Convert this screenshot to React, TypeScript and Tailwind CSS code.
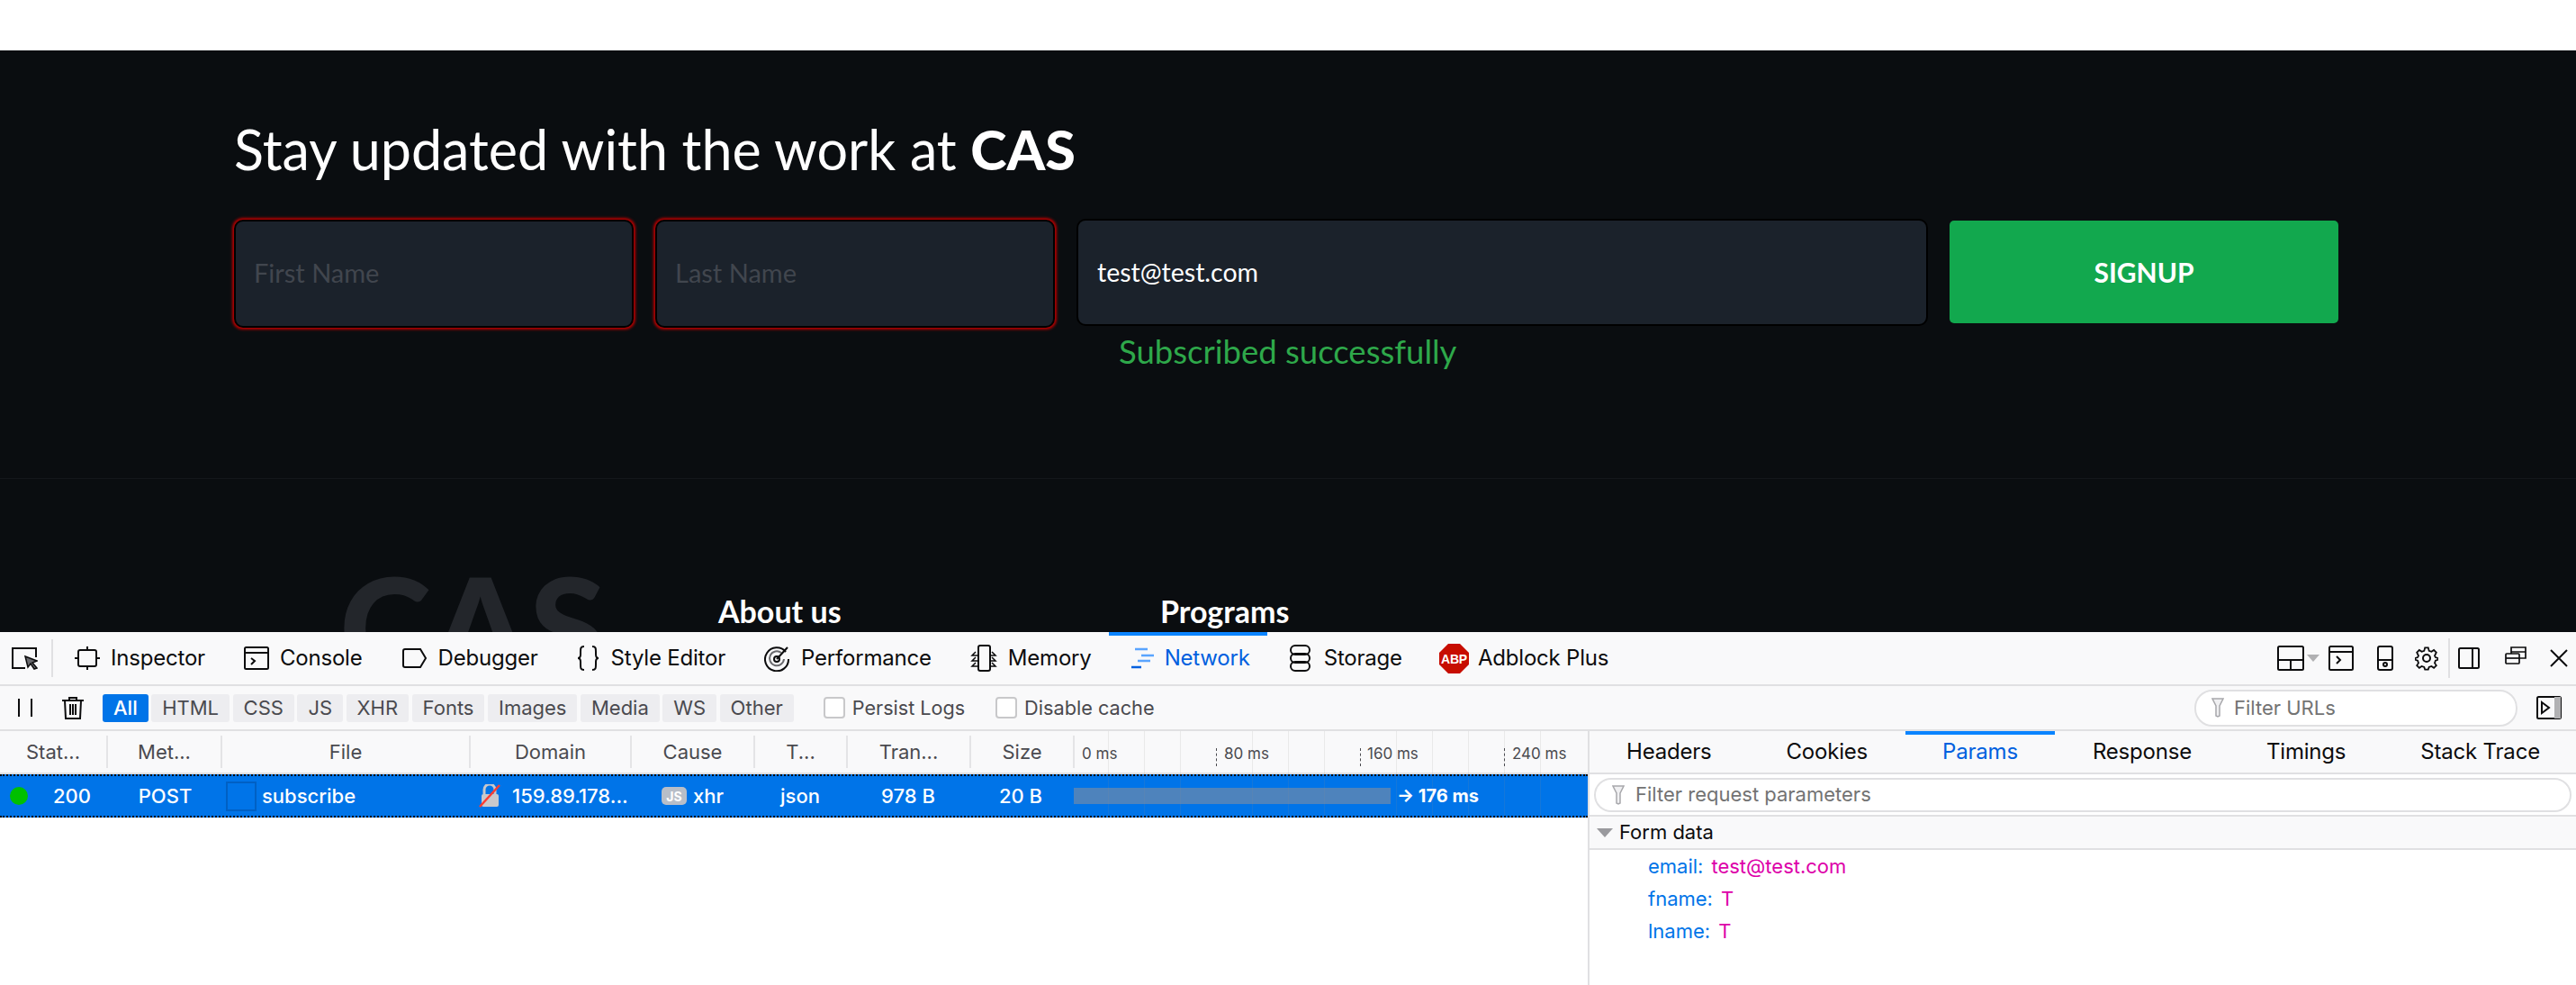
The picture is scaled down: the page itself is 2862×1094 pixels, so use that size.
const headers = [
  { label: "Stat...", width: "w-[120px]" },
  { label: "Met...", width: "w-[127px]" },
  { label: "File", width: "w-[276px]" },
  { label: "Domain", width: "w-[179px]" },
  { label: "Cause", width: "w-[137px]" },
  { label: "T...", width: "w-[103px]" },
  { label: "Tran...", width: "w-[137px]" },
  { label: "Size", width: "w-[115px]" },
]

const filters = ["HTML", "CSS", "JS", "XHR", "Fonts", "Images", "Media", "WS", "Other"]
const gridLines = [1231, 1271, 1311, 1391, 1431, 1471, 1551, 1591, 1631, 1671, 1711]
const params = [
  { key: "email:", value: "test@test.com" },
  { key: "fname:", value: "T" },
  { key: "lname:", value: "T" },
]

function Tab({ icon, label, active }: { icon: React.ReactNode; label: string; active?: boolean }) {
  return (
    <div className="relative flex h-full items-center gap-[12px] pl-6 pr-[19px]">
      {active && <div className="absolute left-0 right-0 top-0 h-[4px] bg-[#0a84ff]" />}
      {icon}
      <span className={active ? "text-[#0060df]" : "text-[#0c0c0d]"}>{label}</span>
    </div>
  )
}

function Svg({ w, h, children }: { w: number; h: number; children: React.ReactNode }) {
  return (
    <svg width={w} height={h} viewBox={`0 0 ${w} ${h}`} fill="none" stroke="#0c0c0d" strokeWidth="2" className="shrink-0">
      {children}
    </svg>
  )
}

function FilterIcon() {
  return (
    <svg width="14" height="22" viewBox="0 0 14 22" className="shrink-0">
      <path d="M1 1h12l-4 8v11l-2 1-2-1V9z" fill="#f0f0f2" stroke="#a8a8ac" strokeWidth="1.5" />
    </svg>
  )
}

export default function App() {
  return (
    <div className="flex h-[1094px] w-[2862px] flex-col overflow-hidden bg-white font-['Inter',sans-serif]">
      <div className="h-14 shrink-0 bg-white" />

      {/* page behind the devtools */}
      <div className="h-[646px] shrink-0 overflow-hidden bg-[#0a0d10] font-['Lato',sans-serif]">
        <div className="h-[476px] border-b border-[#14171b] pl-[260px] pt-[85px]">
          <h2 className="text-[61px] font-normal leading-[50px] text-white">
            Stay updated with the work at <b className="font-black">CAS</b>
          </h2>
          <div className="mt-[52px] flex items-start">
            <input
              placeholder="First Name"
              readOnly
              className="mt-[1px] h-[120px] w-[444px] rounded-[10px] border-2 border-black bg-[#1b222b] pb-[3px] pl-[20px] pr-[22px] text-[29px] shadow-[0_0_3px_2px_#b80000] outline-none placeholder:text-[#41464e]"
            />
            <input
              placeholder="Last Name"
              readOnly
              className="ml-[24px] mt-[1px] h-[120px] w-[444px] rounded-[10px] border-2 border-black bg-[#1b222b] pb-[3px] pl-[20px] pr-[22px] text-[29px] shadow-[0_0_3px_2px_#b80000] outline-none placeholder:text-[#41464e]"
            />
            <div className="ml-[24px] w-[946px]">
              <input
                value="test@test.com"
                readOnly
                className="h-[119px] w-full rounded-[10px] border-2 border-black bg-[#1b222b] pb-[2px] pl-[21px] pr-[22px] text-[28.5px] text-white outline-none"
              />
              <p className="ml-[47px] mt-[4px] text-[36.5px] leading-[48px] text-[#2ea84a]">Subscribed successfully</p>
            </div>
            <button className="ml-[24px] mt-[2px] h-[114px] w-[432px] rounded-[5px] bg-[#12a84e] text-[30px] font-bold text-white">
              SIGNUP
            </button>
          </div>
        </div>
        <div className="flex items-start">
          <div className="ml-[377px] mt-[87px] w-[421px] text-[155px] font-black leading-[150px] text-[#23262b]">CAS</div>
          <div className="mt-[125px] w-[491px] text-[34px] font-bold leading-[44px] text-white">About us</div>
          <div className="mt-[125px] text-[34px] font-bold leading-[44px] text-white">Programs</div>
        </div>
      </div>

      {/* toolbox tabs */}
      <div className="flex h-[60px] shrink-0 items-stretch border-b-2 border-[#e0e0e2] bg-[#f9f9fa] text-[24px] tracking-[-0.2px]">
        <div className="flex w-[57px] items-center pl-3">
          <Svg w={30} h={28}>
            <path d="M28 13V3H2v22h14" />
            <path d="M16 12l13 5-5 2 5 6-3 1-4-6-3 4z" fill="#6a6a6e" strokeWidth="1.5" />
          </Svg>
        </div>
        <div className="my-[8px] w-[2px] bg-[#e0e0e2]" />
        <div className="flex flex-1 items-center">
          <Tab
            label="Inspector"
            icon={
              <Svg w={28} h={28}>
                <rect x="4" y="5" width="20" height="18" rx="2" />
                <path d="M14 1v4M14 23v4M0 14h4M24 14h4" />
              </Svg>
            }
          />
          <Tab
            label="Console"
            icon={
              <Svg w={28} h={26}>
                <rect x="1" y="1" width="26" height="24" rx="1.5" />
                <path d="M1 7h26M8 13l4 3-4 4" />
              </Svg>
            }
          />
          <Tab
            label="Debugger"
            icon={
              <Svg w={29} h={24}>
                <path d="M4 2h17l6 10-6 10H4a2 2 0 0 1-2-2V4a2 2 0 0 1 2-2z" />
              </Svg>
            }
          />
          <Tab
            label="Style Editor"
            icon={
              <Svg w={26} h={30}>
                <path d="M8 2C4 2 4 4 4 8v3c0 3-1 4-3 4 2 0 3 1 3 4v3c0 4 0 6 4 6M17 2c4 0 4 2 4 6v3c0 3 1 4 3 4-2 0-3 1-3 4v3c0 4 0 6-4 6" />
              </Svg>
            }
          />
          <Tab
            label="Performance"
            icon={
              <Svg w={29} h={30}>
                <path d="M24 8a13 13 0 1 0 3 8" />
                <path d="M19 9a8 8 0 1 0 3 7" stroke="#6a6a6e" />
                <path d="M14 16L26 3" />
                <circle cx="14" cy="16" r="3" />
              </Svg>
            }
          />
          <Tab
            label="Memory"
            icon={
              <Svg w={30} h={30}>
                <rect x="9" y="1" width="13" height="28" rx="2" />
                <path d="M6 8l-4 4h7M6 14l-4 4h7M6 20l-4 4h7M24 8l4 4h-6M24 14l4 4h-6M24 20l4 4h-6" strokeWidth="1.5" />
              </Svg>
            }
          />
          <Tab
            active
            label="Network"
            icon={
              <svg width="26" height="24" viewBox="0 0 26 24" fill="none" strokeWidth="2.5" className="shrink-0">
                <path d="M5 2h14M12 9h14M8 15h14" stroke="#5aa5ff" />
                <path d="M1 22h11" stroke="#0060df" />
              </svg>
            }
          />
          <Tab
            label="Storage"
            icon={
              <Svg w={27} h={30}>
                <rect x="2" y="1" width="21" height="10" rx="5" />
                <rect x="2" y="10" width="21" height="10" rx="5" />
                <rect x="2" y="19" width="21" height="10" rx="5" />
              </Svg>
            }
          />
          <div className="flex h-full items-center gap-[10px] pl-[22px]">
            <svg width="33" height="33" viewBox="0 0 33 33" className="shrink-0">
              <path d="M10 0h13l10 10v13L23 33H10L0 23V10z" fill="#c70d00" />
              <text x="16.5" y="22" textAnchor="middle" fontSize="14" fontWeight="700" fill="#fff" fontFamily="Liberation Sans, sans-serif">
                ABP
              </text>
            </svg>
            <span className="text-[#0c0c0d]">Adblock Plus</span>
          </div>
        </div>
        <div className="flex w-[332px] items-center pl-0">
          <Svg w={30} h={28}>
            <rect x="1" y="1" width="28" height="26" rx="1.5" />
            <path d="M1 16h28M15 16v11" />
          </Svg>
          <svg width="14" height="8" viewBox="0 0 14 8" className="ml-[3px] shrink-0">
            <path d="M0 0h14L7 8z" fill="#b1b1b3" />
          </svg>
          <div className="ml-[10px]">
            <Svg w={28} h={28}>
              <rect x="1" y="1" width="26" height="26" rx="1.5" />
              <path d="M1 7h26M9 12l4 4-4 4" />
            </Svg>
          </div>
          <div className="ml-[26px]">
            <Svg w={18} h={28}>
              <rect x="1" y="1" width="16" height="26" rx="2" />
              <path d="M1 16h16" />
              <circle cx="9" cy="21" r="2" />
            </Svg>
          </div>
          <div className="ml-[24px]">
            <Svg w={26} h={28}>
              <circle cx="13" cy="14" r="4" />
              <path d="M11 1h4l1 4 3 1 3-2 3 3-2 4 1 2 3 1v2l-3 1-1 3 2 3-3 3-3-2-3 1-1 3h-4l-1-3-3-1-3 2-3-3 2-3-1-3-3-1v-2l3-1 1-2-2-4 3-3 3 2 3-1z" transform="translate(1.3 1.4) scale(.9)" />
            </Svg>
          </div>
          <div className="ml-[11px] h-[44px] w-[2px] bg-[#e0e0e2]" />
          <div className="ml-[9px]">
            <Svg w={24} h={24}>
              <rect x="1" y="1" width="22" height="22" rx="1.5" />
              <path d="M16 1v22" />
            </Svg>
          </div>
          <div className="ml-[28px] -translate-y-[2px]">
            <Svg w={24} h={24}>
              <path d="M7 9V2h16v12h-7M7 7h16" strokeWidth="1.7" />
              <rect x="1" y="9" width="15" height="11" rx="1" strokeWidth="1.7" />
              <path d="M1 14h15" strokeWidth="1.7" />
            </Svg>
          </div>
          <div className="ml-[26px]">
            <Svg w={20} h={20}>
              <path d="M1 1l18 18M19 1L1 19" />
            </Svg>
          </div>
        </div>
      </div>

      {/* network filter bar */}
      <div className="flex h-[50px] shrink-0 items-center border-b-2 border-[#e0e0e2] bg-[#f9f9fa] text-[22px] text-[#4a4a4f]">
        <div className="ml-[20px] flex h-[20px] w-[16px] justify-between">
          <div className="w-[2px] bg-[#0c0c0d]" />
          <div className="w-[2px] bg-[#0c0c0d]" />
        </div>
        <div className="ml-[32px]">
          <Svg w={26} h={26}>
            <path d="M1 5h24M9 5V2h8v3M4 5l1 20h16l1-20M10 9v12M13 9v12M16 9v12" />
          </Svg>
        </div>
        <div className="ml-[20px] flex gap-[3.5px]">
          <div className="flex h-[31px] items-center rounded-[3px] bg-[#0074e8] px-[12px] font-medium text-white">All</div>
          {filters.map((name) => (
            <div key={name} className="flex h-[31px] items-center rounded-[3px] bg-[#ededf0] px-[12px]">
              {name}
            </div>
          ))}
        </div>
        <div className="ml-[33px] h-[24px] w-[24px] rounded-[4px] border-2 border-[#c8c8ca] bg-white" />
        <span className="ml-[8px] text-[21.6px]">Persist Logs</span>
        <div className="ml-[34px] h-[24px] w-[24px] rounded-[4px] border-2 border-[#c8c8ca] bg-white" />
        <span className="ml-[8px] text-[21.7px]">Disable cache</span>
        <div className="ml-auto flex h-[41px] w-[359px] shrink-0 items-center gap-[11px] rounded-[20px] border-2 border-[#e0e0e2] bg-white pl-[17px] text-[#737373]">
          <FilterIcon />
          Filter URLs
        </div>
        <div className="ml-[21px] mr-[16px]">
          <Svg w={28} h={26}>
            <rect x="1" y="1" width="26" height="24" rx="1.5" />
            <path d="M6 7l8 6-8 6z" />
            <rect x="20" y="1" width="7" height="24" fill="#b1b1b3" stroke="none" />
          </Svg>
        </div>
      </div>

      <div className="flex min-h-0 flex-1">
        {/* request table */}
        <div className="relative w-[1764px] shrink-0 text-[22px]">
          <div className="flex h-[48px] items-center border-b-2 border-[#e0e0e2] bg-[#f9f9fa] text-[#4a4a4f]">
            {headers.map((h) => (
              <div key={h.label} className={`${h.width} flex h-[36px] items-center justify-center border-r-2 border-[#e4e4e6]`}>
                {h.label}
              </div>
            ))}
            <div className="relative h-full flex-1 text-[17px]">
              <span className="absolute left-[8px] top-[13px]">0 ms</span>
              <span className="absolute left-[166px] top-[13px]">80 ms</span>
              <span className="absolute left-[325px] top-[13px]">160 ms</span>
              <span className="absolute left-[486px] top-[13px]">240 ms</span>
            </div>
          </div>

          <div className="flex h-[48px] items-center border-y-2 border-dotted border-black bg-[#0074e8] font-medium text-white">
            <div className="flex w-[120px] items-center pl-[11px]">
              <div className="h-[20px] w-[20px] rounded-full bg-[#00c000]" />
              <span className="ml-[28px]">200</span>
            </div>
            <div className="w-[127px] text-center">POST</div>
            <div className="flex w-[276px] items-center pl-[4px]">
              <div className="h-[33px] w-[34px] border-2 border-[#0060c4]" />
              <span className="ml-[6px]">subscribe</span>
            </div>
            <div className="flex w-[179px] items-center pl-[9px]">
              <svg width="24" height="26" viewBox="0 0 24 26" className="shrink-0">
                <path d="M6 11V6a6 6 0 0 1 12 0v5" fill="none" stroke="#c8c8cc" strokeWidth="3" />
                <rect x="3" y="11" width="19" height="14" rx="2" fill="#c8c8cc" />
                <path d="M1 25L23 1" stroke="#ff3b30" strokeWidth="2.5" />
              </svg>
              <span className="ml-[13px] whitespace-nowrap">159.89.178...</span>
            </div>
            <div className="flex w-[137px] items-center pl-[33px]">
              <div className="flex h-[20px] w-[28px] items-center justify-center rounded-[5px] bg-[#b8bec8] text-[14px] font-bold text-white">JS</div>
              <span className="ml-[7px]">xhr</span>
            </div>
            <div className="w-[103px] pl-[28px]">json</div>
            <div className="w-[137px] pl-[37px]">978 B</div>
            <div className="w-[115px] pl-[31px]">20 B</div>
            <div className="-ml-px flex flex-1 items-center">
              <div className="h-[18px] w-[352px] bg-[#4e83bc]" />
              <span className="ml-[7px] text-[20px] font-bold">→ 176 ms</span>
            </div>
          </div>

          {/* waterfall grid lines */}
          {gridLines.map((x) => (
            <div key={x} className="pointer-events-none absolute top-0 h-[96px] w-[1px] bg-[#8a8a8a]/15" style={{ left: x }} />
          ))}
          <div className="absolute left-[1351px] top-[19px] h-[20px] w-[1px] border-l border-dashed border-[#4a4a4f]" />
          <div className="absolute left-[1511px] top-[19px] h-[20px] w-[1px] border-l border-dashed border-[#4a4a4f]" />
          <div className="absolute left-[1671px] top-[19px] h-[20px] w-[1px] border-l border-dashed border-[#4a4a4f]" />
        </div>

        {/* request details */}
        <div className="flex min-w-0 flex-1 flex-col border-l-2 border-[#e0e0e2] text-[22px]">
          <div className="flex h-[48px] shrink-0 items-stretch border-b-2 border-[#e0e0e2] bg-[#f9f9fa] text-[24px] tracking-[-0.2px] text-[#0c0c0d]">
            <div className="flex items-center pl-[41px] pr-[41.5px]">Headers</div>
            <div className="flex items-center px-[41.5px]">Cookies</div>
            <div className="relative flex items-center px-[41.5px] text-[#0060df]">
              <div className="absolute left-0 right-0 top-0 h-[4px] bg-[#0a84ff]" />
              Params
            </div>
            <div className="flex items-center px-[41.5px]">Response</div>
            <div className="flex items-center px-[41.5px]">Timings</div>
            <div className="flex items-center pl-[41.5px]">Stack Trace</div>
          </div>
          <div className="flex h-[47px] shrink-0 items-center border-b-2 border-[#e0e0e2] px-[5px]">
            <div className="flex h-[38px] w-[1086px] items-center gap-[12px] rounded-[19px] border-2 border-[#e0e0e2] bg-white pl-[18px] text-[#737373]">
              <FilterIcon />
              Filter request parameters
            </div>
          </div>
          <div className="flex h-[37px] shrink-0 items-center border-b-2 border-[#e0e0e2] bg-[#f9f9fa] pl-[8px] text-[#0c0c0d]">
            <svg width="18" height="10" viewBox="0 0 18 10" className="shrink-0">
              <path d="M0 0h18L9 10z" fill="#9a9a9e" />
            </svg>
            <span className="ml-[7px]">Form data</span>
          </div>
          <div className="pl-[65px]">
            {params.map((p) => (
              <div key={p.key} className="flex h-[36px] items-center gap-[9px]">
                <span className="text-[#0074e8]">{p.key}</span>
                <span className="text-[#dd00a9]">{p.value}</span>
              </div>
            ))}
          </div>
        </div>
      </div>
    </div>
  )
}
